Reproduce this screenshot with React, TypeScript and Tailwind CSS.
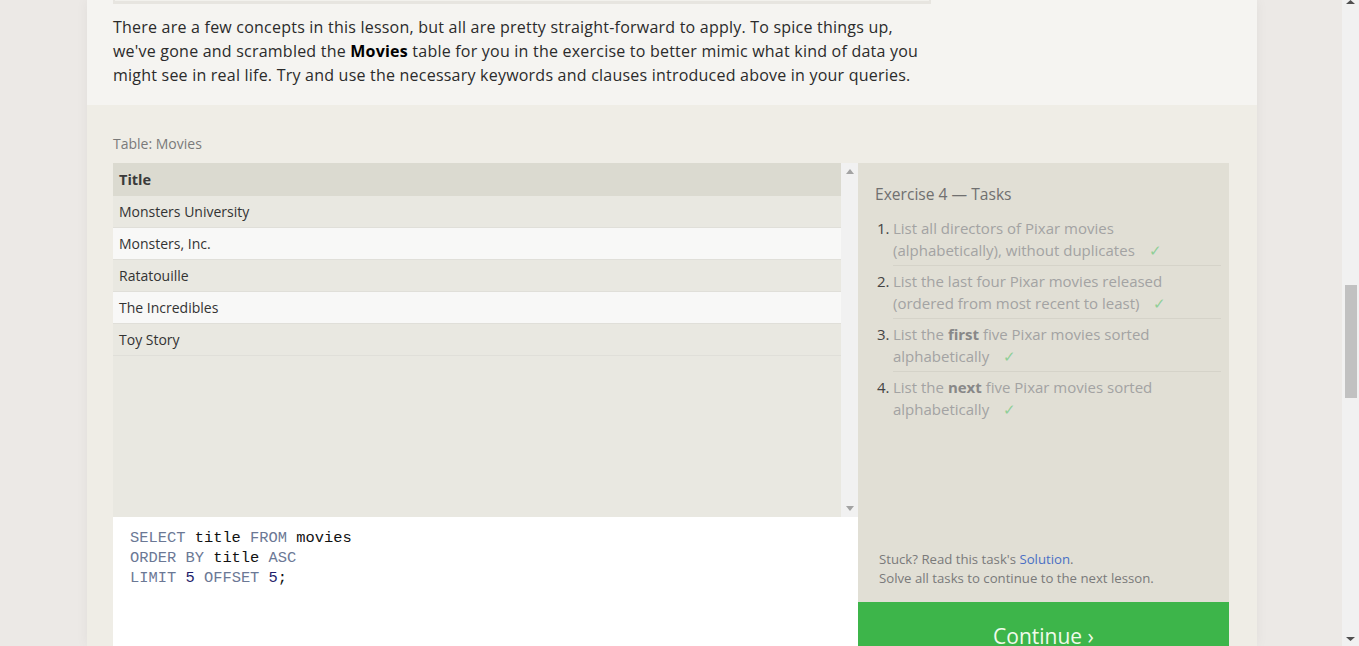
import React from "react";

const sans = { fontFamily: '"Open Sans", "Noto Sans", sans-serif' };
const mono = { fontFamily: '"Liberation Mono", "DejaVu Sans Mono", monospace' };

const rows = ["Monsters University", "Monsters, Inc.", "Ratatouille", "The Incredibles", "Toy Story"];

function Check() {
  return <span className="ml-[10px] text-[#8fcf98]">✓</span>;
}

export default function App() {
  return (
    <div className="flex h-[646px] w-full overflow-hidden bg-[#ece9e6]" style={sans}>
      <div className="flex flex-1 justify-center pl-[2px]">
        <div className="flex w-[1170px] flex-col shadow-[0_0_12px_rgba(0,0,0,0.05)]">
          {/* lesson text */}
          <div className="bg-[#f5f4f1] px-[26px] pb-[18px]">
            <div className="h-[4px] w-[818px] border-x-2 border-b-[3px] border-[#e7e5e0] bg-[#f2f1ed]" />
            <p className="mt-[11px] whitespace-nowrap text-[16px] leading-[24px] tracking-[0.22px] text-[#2b2b2b]">
              There are a few concepts in this lesson, but all are pretty straight-forward to apply. To spice things up,
              <br />
              we've gone and scrambled the <b className="font-bold text-black">Movies</b> table for you in the exercise to better mimic what kind of data you
              <br />
              might see in real life. Try and use the necessary keywords and clauses introduced above in your queries.
            </p>
          </div>
          {/* exercise */}
          <div className="flex-1 bg-[#efede6] pl-[26px] pr-[28px] pt-[29px]">
            <div className="text-[14px] leading-[20px] text-[#7a7a7a]">Table: Movies</div>
            <div className="mt-[9px] flex">
              {/* left column */}
              <div className="flex w-[745px] flex-col">
                <div className="flex h-[354px] bg-[#e9e8e1]">
                  <div className="flex-1">
                    <div className="flex h-[33px] items-center bg-[#dbdad0] px-[6px] pt-[1px] text-[14.5px] font-bold text-[#3a3a3a]">
                      Title
                    </div>
                    {rows.map((r, i) => (
                      <div
                        key={r}
                        className={
                          i % 2 === 0
                            ? "flex h-[32px] items-center border-b border-[#e0dfd9] bg-[#e9e8e1] px-[6px] text-[14px] text-[#333]"
                            : "flex h-[32px] items-center border-b border-[#e0dfd9] bg-[#f8f8f7] px-[6px] text-[14px] text-[#333]"
                        }
                      >
                        {r}
                      </div>
                    ))}
                  </div>
                  <div className="flex w-[17px] flex-col items-center justify-between bg-[#f1f1f1] py-[6px]">
                    <svg width="8" height="5" viewBox="0 0 8 5"><path d="M0 5 L4 0 L8 5 Z" fill="#a3a3a3" /></svg>
                    <svg width="8" height="5" viewBox="0 0 8 5"><path d="M0 0 L4 5 L8 0 Z" fill="#a3a3a3" /></svg>
                  </div>
                </div>
                <div className="h-[200px] bg-white pl-[17px] pt-[11px] text-[15.4px] leading-[20px]" style={mono}>
                  <div>
                    <span className="text-[#6b7895]">SELECT</span> <span className="text-[#111]">title</span>{" "}
                    <span className="text-[#6b7895]">FROM</span> <span className="text-[#111]">movies</span>
                  </div>
                  <div>
                    <span className="text-[#6b7895]">ORDER BY</span> <span className="text-[#111]">title</span>{" "}
                    <span className="text-[#6b7895]">ASC</span>
                  </div>
                  <div>
                    <span className="text-[#6b7895]">LIMIT</span> <span className="text-[#1d1d6b]">5</span>{" "}
                    <span className="text-[#6b7895]">OFFSET</span> <span className="text-[#1d1d6b]">5</span>
                    <span className="text-[#111]">;</span>
                  </div>
                </div>
              </div>
              {/* right column */}
              <div className="flex w-[371px] flex-col">
                <div className="flex h-[439px] flex-col justify-between bg-[#e1dfd5] pb-[14px] pl-[17px] pr-[8px] pt-[19px]">
                  <div>
                    <div className="text-[15.6px] leading-[24px] text-[#707070]">Exercise 4 — Tasks</div>
                    <ol className="mt-[11px] text-[15px] leading-[22px] text-[#a3a3a3]">
                      <li className="flex">
                        <span className="w-[18px] shrink-0 pl-[2px] text-[#444]">1.</span>
                        <div className="flex-1 border-b border-[#d5d3c9] pb-[4px]">
                          List all directors of Pixar movies
                          <br />
                          (alphabetically), without duplicates <Check />
                        </div>
                      </li>
                      <li className="mt-[4px] flex">
                        <span className="w-[18px] shrink-0 pl-[2px] text-[#444]">2.</span>
                        <div className="flex-1 border-b border-[#d5d3c9] pb-[4px]">
                          List the last four Pixar movies released
                          <br />
                          (ordered from most recent to least) <Check />
                        </div>
                      </li>
                      <li className="mt-[4px] flex">
                        <span className="w-[18px] shrink-0 pl-[2px] text-[#444]">3.</span>
                        <div className="flex-1 border-b border-[#d5d3c9] pb-[4px]">
                          List the <b className="font-bold text-[#888]">first</b> five Pixar movies sorted
                          <br />
                          alphabetically <Check />
                        </div>
                      </li>
                      <li className="mt-[4px] flex">
                        <span className="w-[18px] shrink-0 pl-[2px] text-[#444]">4.</span>
                        <div className="flex-1 pb-[4px]">
                          List the <b className="font-bold text-[#888]">next</b> five Pixar movies sorted
                          <br />
                          alphabetically <Check />
                        </div>
                      </li>
                    </ol>
                  </div>
                  <div className="pl-[4px] text-[13.2px] leading-[19px] text-[#7a7a7a]">
                    <div>
                      Stuck? Read this task's <span className="text-[#4a6fc4]">Solution</span>.
                    </div>
                    <div>Solve all tasks to continue to the next lesson.</div>
                  </div>
                </div>
                <div className="flex h-[70px] items-center justify-center bg-[#3db54a] text-[21px] text-[#f0fbea]">
                  Continue ›
                </div>
              </div>
            </div>
          </div>
        </div>
      </div>
      {/* page scrollbar */}
      <div className="flex w-[17px] flex-col items-center bg-[#f1f1f1]">
        <div className="flex h-[6px] items-start">
          <svg width="9" height="4" viewBox="0 0 9 4"><path d="M0 4 L4.5 0 L9 4 Z" fill="#505050" /></svg>
        </div>
        <div className="flex-1 pt-[279px]">
          <div className="h-[113px] w-[12px] bg-[#c1c1c1]" />
        </div>
        <div className="pb-[5px]">
          <svg width="9" height="4" viewBox="0 0 9 4"><path d="M0 0 L4.5 4 L9 0 Z" fill="#505050" /></svg>
        </div>
      </div>
    </div>
  );
}
